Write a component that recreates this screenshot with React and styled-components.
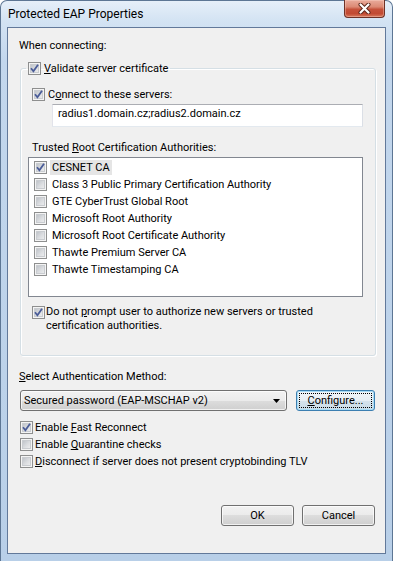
import React from 'react';
import styled, { createGlobalStyle } from 'styled-components';

const GlobalStyle = createGlobalStyle`
  body {
    margin: 0;
    background: #fff;
    font-family: Roboto, "Open Sans", sans-serif;
    font-size: 11px;
    color: #000;
  }
  u { text-underline-offset: 1px; }
`;

const certificates = [
    { name: 'CESNET CA', checked: true, selected: true },
    { name: 'Class 3 Public Primary Certification Authority' },
    { name: 'GTE CyberTrust Global Root' },
    { name: 'Microsoft Root Authority' },
    { name: 'Microsoft Root Certificate Authority' },
    { name: 'Thawte Premium Server CA' },
    { name: 'Thawte Timestamping CA' },
];

// vista style checkbox
const Check = ({ checked, $mt }) => (
    <Box $mt={$mt}>
        {checked &&
            <svg width="11" height="11" viewBox="0 0 11 11">
                <path d="M2 5.2 L4.4 8.2 L9 1.8" fill="none" stroke="#4a5c98" strokeWidth="1.8" />
            </svg>
        }
    </Box>
);

export default function App() {
    return (
        <>
            <GlobalStyle />
            <Window>
                <TitleBar>
                    <Title>Protected EAP Properties</Title>
                    <CloseButton>
                        <svg width="13" height="11" viewBox="0 0 13 11">
                            <path d="M2.5 1.5 L10.5 9.5 M10.5 1.5 L2.5 9.5" stroke="#5a2418" strokeWidth="4" strokeLinecap="round" />
                            <path d="M2.5 1.5 L10.5 9.5 M10.5 1.5 L2.5 9.5" stroke="#fff" strokeWidth="2.2" strokeLinecap="round" />
                        </svg>
                    </CloseButton>
                </TitleBar>
                <Client>
                    <Text $ml={11} $mt={10}>When connecting:</Text>
                    <Group>
                        <Legend>
                            <Check checked />
                            <span><u>V</u>alidate server certificate</span>
                        </Legend>
                        <CheckRow $ml={11} $mt={11}>
                            <Check checked />
                            <span>C<u>o</u>nnect to these servers:</span>
                        </CheckRow>
                        <TextBox>radius1.domain.cz;radius2.domain.cz</TextBox>
                        <Text $ml={11} $mt={13}>Trusted <u>R</u>oot Certification Authorities:</Text>
                        <ListBox>
                            {certificates.map((cert, index) => (
                                <ListItem key={index}>
                                    <Check checked={cert.checked} />
                                    <ItemLabel $selected={cert.selected}>{cert.name}</ItemLabel>
                                </ListItem>
                            ))}
                        </ListBox>
                        <PromptRow>
                            <Check checked $mt={1} />
                            <span>Do not <u>p</u>rompt user to authorize new servers or trusted<br />certification authorities.</span>
                        </PromptRow>
                    </Group>
                    <Text $ml={11} $mt={13}><u>S</u>elect Authentication Method:</Text>
                    <ComboRow>
                        <Combo>
                            <span>Secured password (EAP-MSCHAP v2)</span>
                            <svg width="7" height="4" viewBox="0 0 7 4">
                                <path d="M0 0 H7 L3.5 4 Z" fill="#000" />
                            </svg>
                        </Combo>
                        <Button $width={79} $default>
                            <FocusRect><u>C</u>onfigure...</FocusRect>
                        </Button>
                    </ComboRow>
                    <CheckRow $ml={12} $mt={8} $height={17} $gap={2}>
                        <Check checked />
                        <span>Enable <u>F</u>ast Reconnect</span>
                    </CheckRow>
                    <CheckRow $ml={12} $height={17} $gap={2}>
                        <Check />
                        <span>Enable <u>Q</u>uarantine checks</span>
                    </CheckRow>
                    <CheckRow $ml={12} $height={17} $gap={2}>
                        <Check />
                        <span><u>D</u>isconnect if server does not present cryptobinding TLV</span>
                    </CheckRow>
                    <ButtonRow>
                        <Button $width={73}>OK</Button>
                        <Button $width={73}>Cancel</Button>
                    </ButtonRow>
                </Client>
            </Window>
        </>
    );
}

const Window = styled.div`
width: 393px;
height: 561px;
box-sizing: border-box;
display: flex;
flex-direction: column;
padding: 0 6px 7px 6px;
border: 1px solid #5d7694;
border-bottom: none;
border-radius: 7px 7px 0 0;
background: linear-gradient(180deg, #e6eff9 0px, #d3e3f3 20px, #c3d7ed 60px, #b8cfe8 100%);
`;

const TitleBar = styled.div`
height: 26px;
display: flex;
justify-content: space-between;
align-items: flex-start;
flex: none;
`;

const Title = styled.div`
margin-top: 6px;
padding-left: 1px;
line-height: 15px;
font-size: 12px;
`;

const CloseButton = styled.div`
width: 41px;
height: 18px;
box-sizing: border-box;
margin-top: -1px;
margin-right: 1px;
display: flex;
align-items: center;
justify-content: center;
border: 1px solid #6e3126;
border-top: none;
border-radius: 0 0 4px 4px;
background: linear-gradient(180deg, #e9ab9b 0%, #dc8a75 40%, #c5513a 55%, #c24a32 80%, #d87a5e 100%);
box-shadow: inset 0 0 0 1px rgba(255, 220, 210, 0.35);
`;

const Client = styled.div`
flex: 1;
display: flex;
flex-direction: column;
border: 1px solid #62799a;
background: #f0f0f0;
`;

const Text = styled.div`
margin-left: ${p => p.$ml || 0}px;
margin-top: ${p => p.$mt || 0}px;
line-height: 15px;
`;

const Group = styled.fieldset`
margin: 8px 0 0 12px;
width: 356px;
box-sizing: border-box;
padding: 0 0 22px 0;
border: 1px solid #d5dfe5;
border-radius: 3px;
box-shadow: inset 1px 1px 0 #fff, 1px 1px 0 #fff;
min-inline-size: 0;
`;

const Legend = styled.legend`
margin-left: 5px;
padding: 0 2px;
display: flex;
align-items: center;
gap: 3px;
line-height: 15px;
`;

const CheckRow = styled.label`
display: flex;
align-items: center;
gap: ${p => p.$gap ?? 3}px;
height: ${p => p.$height || 15}px;
margin-left: ${p => p.$ml || 0}px;
margin-top: ${p => p.$mt || 0}px;
line-height: 15px;
`;

const Box = styled.span`
flex: none;
width: 13px;
height: 13px;
box-sizing: border-box;
margin-top: ${p => p.$mt || 0}px;
display: flex;
align-items: center;
justify-content: center;
border: 1px solid #8e8f8f;
background: linear-gradient(135deg, #b3b8bf 0%, #dcdee1 55%, #f4f4f4 100%);
box-shadow: inset 0 0 0 1px #f4f4f4, inset 0 0 0 2px #c9ccd0;
`;

const TextBox = styled.div`
margin: 2px 0 0 31px;
width: 311px;
height: 23px;
box-sizing: border-box;
padding: 1px 5px 0 5px;
border: 1px solid;
border-color: #abadb3 #dbdfe6 #e3e9ef #e2e3ea;
background: #fff;
line-height: 15px;
`;

const ListBox = styled.div`
margin: 2px 0 0 7px;
width: 335px;
height: 140px;
box-sizing: border-box;
padding-top: 1px;
border: 1px solid #828790;
background: #fff;
`;

const ListItem = styled.div`
height: 17px;
display: flex;
align-items: center;
gap: 3px;
padding-left: 5px;
`;

const ItemLabel = styled.span`
padding: 0 2px;
line-height: 15px;
background: ${p => p.$selected ? '#e5e5e5' : 'transparent'};
`;

const PromptRow = styled.label`
display: flex;
align-items: flex-start;
gap: 1px;
margin: 8px 0 0 11px;
line-height: 14px;
`;

const ComboRow = styled.div`
display: flex;
gap: 9px;
margin: 6px 0 0 12px;
`;

const Combo = styled.div`
width: 267px;
height: 21px;
box-sizing: border-box;
display: flex;
align-items: center;
justify-content: space-between;
padding: 0 6px 0 3px;
border: 1px solid #707070;
border-radius: 3px;
background: linear-gradient(180deg, #f2f2f2 0%, #ebebeb 50%, #dddddd 50%, #cfcfcf 100%);
box-shadow: inset 0 0 0 1px rgba(255, 255, 255, 0.7);
line-height: 15px;
`;

const Button = styled.div`
width: ${p => p.$width}px;
height: 21px;
box-sizing: border-box;
display: flex;
align-items: stretch;
justify-content: center;
padding: 2px;
border: 1px solid ${p => p.$default ? '#3c7fb1' : '#707070'};
border-radius: 3px;
background: ${p => p.$default
        ? 'linear-gradient(180deg, #f1f5f8 0%, #e7eef3 50%, #d6e3ec 50%, #c9dbe7 100%)'
        : 'linear-gradient(180deg, #f2f2f2 0%, #ebebeb 50%, #dddddd 50%, #cfcfcf 100%)'};
box-shadow: inset 0 0 0 1px ${p => p.$default ? '#a8dcf5' : 'rgba(255, 255, 255, 0.7)'};
line-height: 15px;
text-align: center;
align-items: center;
`;

const FocusRect = styled.span`
flex: 1;
align-self: stretch;
display: flex;
align-items: center;
justify-content: center;
border: 1px dotted #000;
`;

const ButtonRow = styled.div`
display: flex;
justify-content: flex-end;
gap: 8px;
margin: 35px 10px 0 0;
`;
